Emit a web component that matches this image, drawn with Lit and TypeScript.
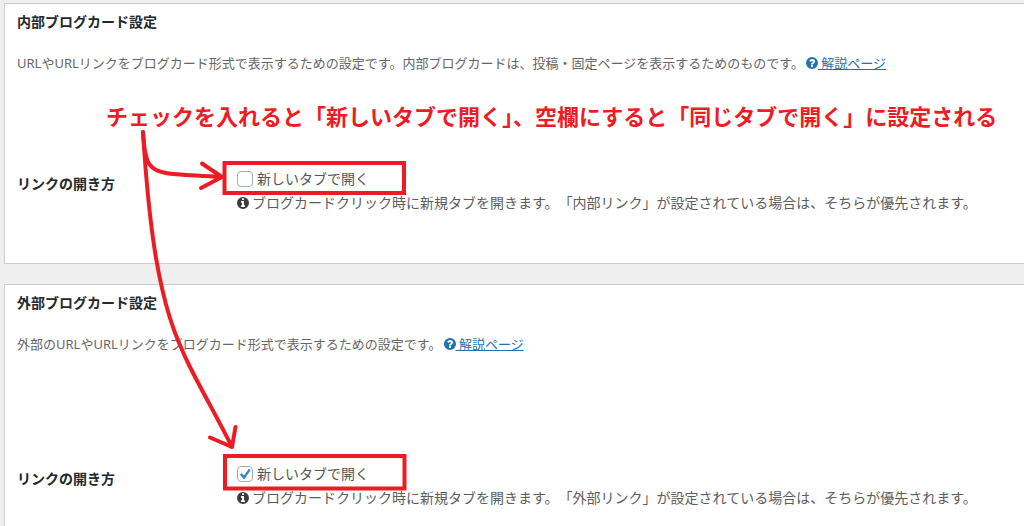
import { LitElement, html, css, svg } from "lit";
import { customElement, property } from "lit/decorators.js";

const questionIcon = html`<svg class="icon" viewBox="0 0 1536 1536" aria-hidden="true">${svg`<path fill="currentColor" d="M768 0a768 768 0 1 0 0 1536a768 768 0 0 0 0-1536zM896 1248q0 32-32 32h-192q-32 0-32-32v-192q0-32 32-32h192q32 0 32 32zM1152 576q0 80-32 138q-30 55-122 108q-102 58-102 106q0 32-32 32h-192q-32 0-32-40q0-120 158-204q98-50 98-116q0-42-38-70t-90-28q-56 0-92 26q-30 22-74 78q-20 24-46 6l-132-100q-24-18-8-44q128-212 372-212q136 0 250 94t114 226z"/>`}</svg>`;

const infoIcon = html`<svg class="icon" viewBox="0 0 1536 1536" aria-hidden="true">${svg`<path fill="currentColor" d="M768 0a768 768 0 1 0 0 1536a768 768 0 0 0 0-1536zM1024 1248q0 32-32 32h-448q-32 0-32-32v-160q0-32 32-32h96v-320h-96q-32 0-32-32v-160q0-32 32-32h320q32 0 32 32v512h96q32 0 32 32zM896 352q0 32-32 32h-192q-32 0-32-32v-160q0-32 32-32h192q32 0 32 32z"/>`}</svg>`;

@customElement("settings-card")
export class SettingsCard extends LitElement {
  @property() heading = "";
  @property() description = "";
  @property() help = "";
  @property({ type: Boolean }) checked = false;
  @property({ type: Boolean, reflect: true }) roomy = false;

  static styles = css`
    :host {
      display: block;
      background: #fff;
      border: 1px solid #ccc;
      border-right: none;
      padding: 0 12px 48px;
      box-sizing: border-box;
      text-spacing-trim: space-all;
    }
    .heading {
      margin: 0 0 13px;
      font-size: 14px;
      line-height: 36px;
      font-weight: 700;
      color: #23282d;
    }
    .description {
      margin: 0;
      font-size: 13px;
      line-height: 20px;
      color: #666;
    }
    .link {
      color: #2271b1;
      margin-left: 2px;
    }
    .icon {
      width: 12px;
      height: 12px;
      vertical-align: -1px;
    }
    .field {
      display: grid;
      grid-template-columns: 220px 1fr;
      margin-top: 94px;
      font-size: 14px;
      line-height: 24px;
    }
    :host([roomy]) .field {
      margin-top: 108px;
    }
    .name {
      padding-top: 5px;
      font-weight: 700;
      color: #23282d;
    }
    .option {
      display: flex;
      align-items: center;
      gap: 4px;
      color: #555;
    }
    .box {
      appearance: none;
      box-sizing: border-box;
      width: 16px;
      height: 16px;
      margin: 0;
      border: 1px solid #a8abae;
      border-radius: 4px;
      background: #fff;
    }
    .tick {
      grid-area: 1 / 1;
      width: 16px;
      height: 16px;
      pointer-events: none;
    }
    .control {
      display: grid;
    }
    .control .box {
      grid-area: 1 / 1;
    }
    .help {
      margin: 0;
      color: #5c5c5c;
    }
    .help .icon {
      color: #3c3c3c;
      margin-right: 3px;
    }
  `;

  render() {
    return html`
      <h2 class="heading">${this.heading}</h2>
      <p class="description">
        ${this.description}<a class="link" href="#">${questionIcon} 解説ページ</a>
      </p>
      <div class="field" role="group" aria-labelledby="name">
        <div class="name" id="name">リンクの開き方</div>
        <div>
          <label class="option" for="newtab">
            <span class="control">
              <input class="box" id="newtab" type="checkbox" aria-describedby="help" .checked=${this.checked}
                @change=${(e: Event) => (this.checked = (e.target as HTMLInputElement).checked)} />
              ${this.checked
                ? html`<svg class="tick" viewBox="0 0 16 16" aria-hidden="true"><path d="M2.8 8.4L4.8 7.2L7 9.4L11.9 2.8L13.6 3.9L7.7 12.8H6.3Z" fill="#3582c4" /></svg>`
                : ""}
            </span>
            新しいタブで開く
          </label>
          <p class="help" id="help">${infoIcon}${this.help}</p>
        </div>
      </div>
    `;
  }
}

@customElement("app-root")
export class AppRoot extends LitElement {
  static styles = css`
    :host {
      display: block;
      position: relative;
      box-sizing: border-box;
      height: 100vh;
      overflow: hidden;
      padding: 3px 0 0 4px;
      background: #efefef;
      font-family: "Noto Sans", "Noto Sans CJK JP", sans-serif;
    }
    .cards {
      display: grid;
      gap: 20px;
    }
    .note {
      position: absolute;
      left: 106px;
      top: 100px;
      margin: 0;
      font-size: 22px;
      line-height: 32px;
      font-weight: 700;
      color: #ed1c24;
      white-space: nowrap;
    }
    .marks {
      position: absolute;
      left: 0;
      top: 0;
      width: 1024px;
      height: 526px;
      pointer-events: none;
    }
  `;

  render() {
    return html`
      <main class="cards">
        <settings-card
          heading="内部ブログカード設定"
          description="URLやURLリンクをブログカード形式で表示するための設定です。内部ブログカードは、投稿・固定ページを表示するためのものです。"
          help="ブログカードクリック時に新規タブを開きます。「内部リンク」が設定されている場合は、そちらが優先されます。"
        ></settings-card>
        <settings-card
          roomy
          checked
          heading="外部ブログカード設定"
          description="外部のURLやURLリンクをブログカード形式で表示するための設定です。"
          help="ブログカードクリック時に新規タブを開きます。「外部リンク」が設定されている場合は、そちらが優先されます。"
        ></settings-card>
      </main>
      <p class="note">チェックを入れると「新しいタブで開く」、空欄にすると「同じタブで開く」に設定される</p>
      <svg class="marks" viewBox="0 0 1024 526" fill="none" stroke="#ed1c24" stroke-width="4" stroke-linecap="round" stroke-linejoin="round" aria-hidden="true">
        <g stroke-linejoin="miter">
          <rect x="224.500" y="163" width="179.500" height="30" />
          <rect x="225" y="456" width="179.500" height="32.500" />
        </g>
        <path d="M143 132C144 149 146 160 150 165C158 176 180 174 221 177M202 163.500L222 177L201 188" />
        <path d="M143 132C146 180 150 222 156 258C164 304 173 333 190 367C202 391 219 421 232 447M210 437.500L232 447L235.500 427" />
      </svg>
    `;
  }
}
